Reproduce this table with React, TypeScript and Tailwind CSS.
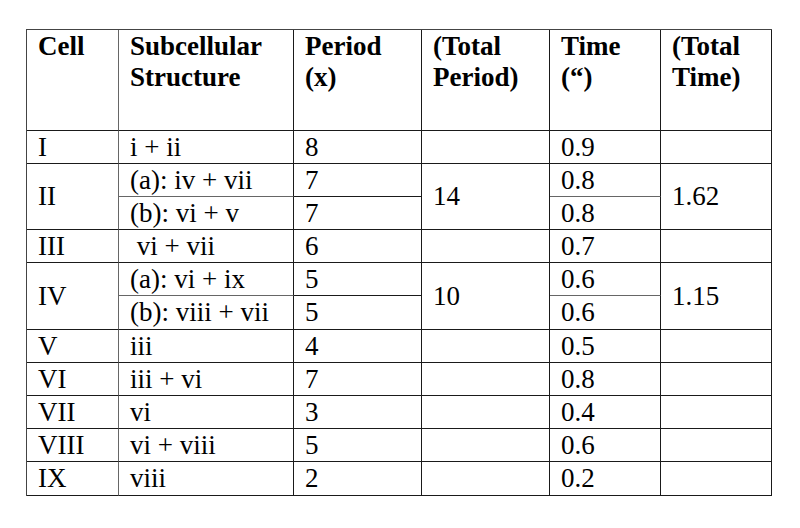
const COLS = "grid-cols-[92px_175px_128px_128px_111px_111px]";
const ROWS =
  "grid-rows-[101px_33px_33px_33px_33px_33px_34px_33px_33px_33px_33px_34px]";

type Row = {
  cell?: string;
  span?: boolean;
  sub: string;
  period: string;
  total?: string;
  time: string;
  totalTime?: string;
  skipMerged?: boolean;
};

const DATA: Row[] = [
  { cell: "I", sub: "i + ii", period: "8", total: "", time: "0.9", totalTime: "" },
  { cell: "II", span: true, sub: "(a): iv + vii", period: "7", total: "14", time: "0.8", totalTime: "1.62" },
  { skipMerged: true, sub: "(b): vi + v", period: "7", time: "0.8" },
  { cell: "III", sub: "\u00a0vi + vii", period: "6", total: "", time: "0.7", totalTime: "" },
  { cell: "IV", span: true, sub: "(a): vi + ix", period: "5", total: "10", time: "0.6", totalTime: "1.15" },
  { skipMerged: true, sub: "(b): viii + vii", period: "5", time: "0.6" },
  { cell: "V", sub: "iii", period: "4", total: "", time: "0.5", totalTime: "" },
  { cell: "VI", sub: "iii + vi", period: "7", total: "", time: "0.8", totalTime: "" },
  { cell: "VII", sub: "vi", period: "3", total: "", time: "0.4", totalTime: "" },
  { cell: "VIII", sub: "vi + viii", period: "5", total: "", time: "0.6", totalTime: "" },
  { cell: "IX", sub: "viii", period: "2", total: "", time: "0.2", totalTime: "" },
];

const HEAD = [
  ["Cell"],
  ["Subcellular", "Structure"],
  ["Period", "(x)"],
  ["(Total", "Period)"],
  ["Time", "(\u201c)"],
  ["(Total", "Time)"],
];

function Cell({
  children,
  span,
  extra = "",
}: {
  children?: React.ReactNode;
  span?: boolean;
  extra?: string;
}) {
  return (
    <div
      className={`flex items-center whitespace-pre border-r border-b border-[#1a1a1a] pl-[11px] ${
        span ? "row-span-2" : ""
      } ${extra}`}
    >
      {children}
    </div>
  );
}

export default function App() {
  return (
    <div className="h-[528px] w-[800px] bg-white pt-[29px] pl-[26px]">
      <div
        className={`grid w-max ${COLS} ${ROWS} border-t border-l border-[#444] text-[27px] leading-[31px] text-black`}
        style={{ fontFamily: '"Liberation Serif", "Times New Roman", serif' }}
      >
        {HEAD.map((lines, i) => (
          <div
            key={i}
            className={`border-r border-b border-[#1a1a1a] pl-[11px] pt-[1px] font-bold ${
              i === 0 ? "border-r-[#666]" : ""
            }`}
          >
            {lines.map((l) => (
              <div key={l}>{l}</div>
            ))}
          </div>
        ))}

        {DATA.map((r, i) => (
          <div key={i} className="contents">
            {!r.skipMerged && (
              <Cell span={r.span} extra="border-r-[#666]">
                {r.cell}
              </Cell>
            )}
            <Cell extra={r.span ? "border-b-[#666]" : ""}>{r.sub}</Cell>
            <Cell>{r.period}</Cell>
            {!r.skipMerged && <Cell span={r.span}>{r.total}</Cell>}
            <Cell extra={r.span ? "border-b-[#666]" : ""}>{r.time}</Cell>
            {!r.skipMerged && <Cell span={r.span}>{r.totalTime}</Cell>}
          </div>
        ))}
      </div>
    </div>
  );
}
